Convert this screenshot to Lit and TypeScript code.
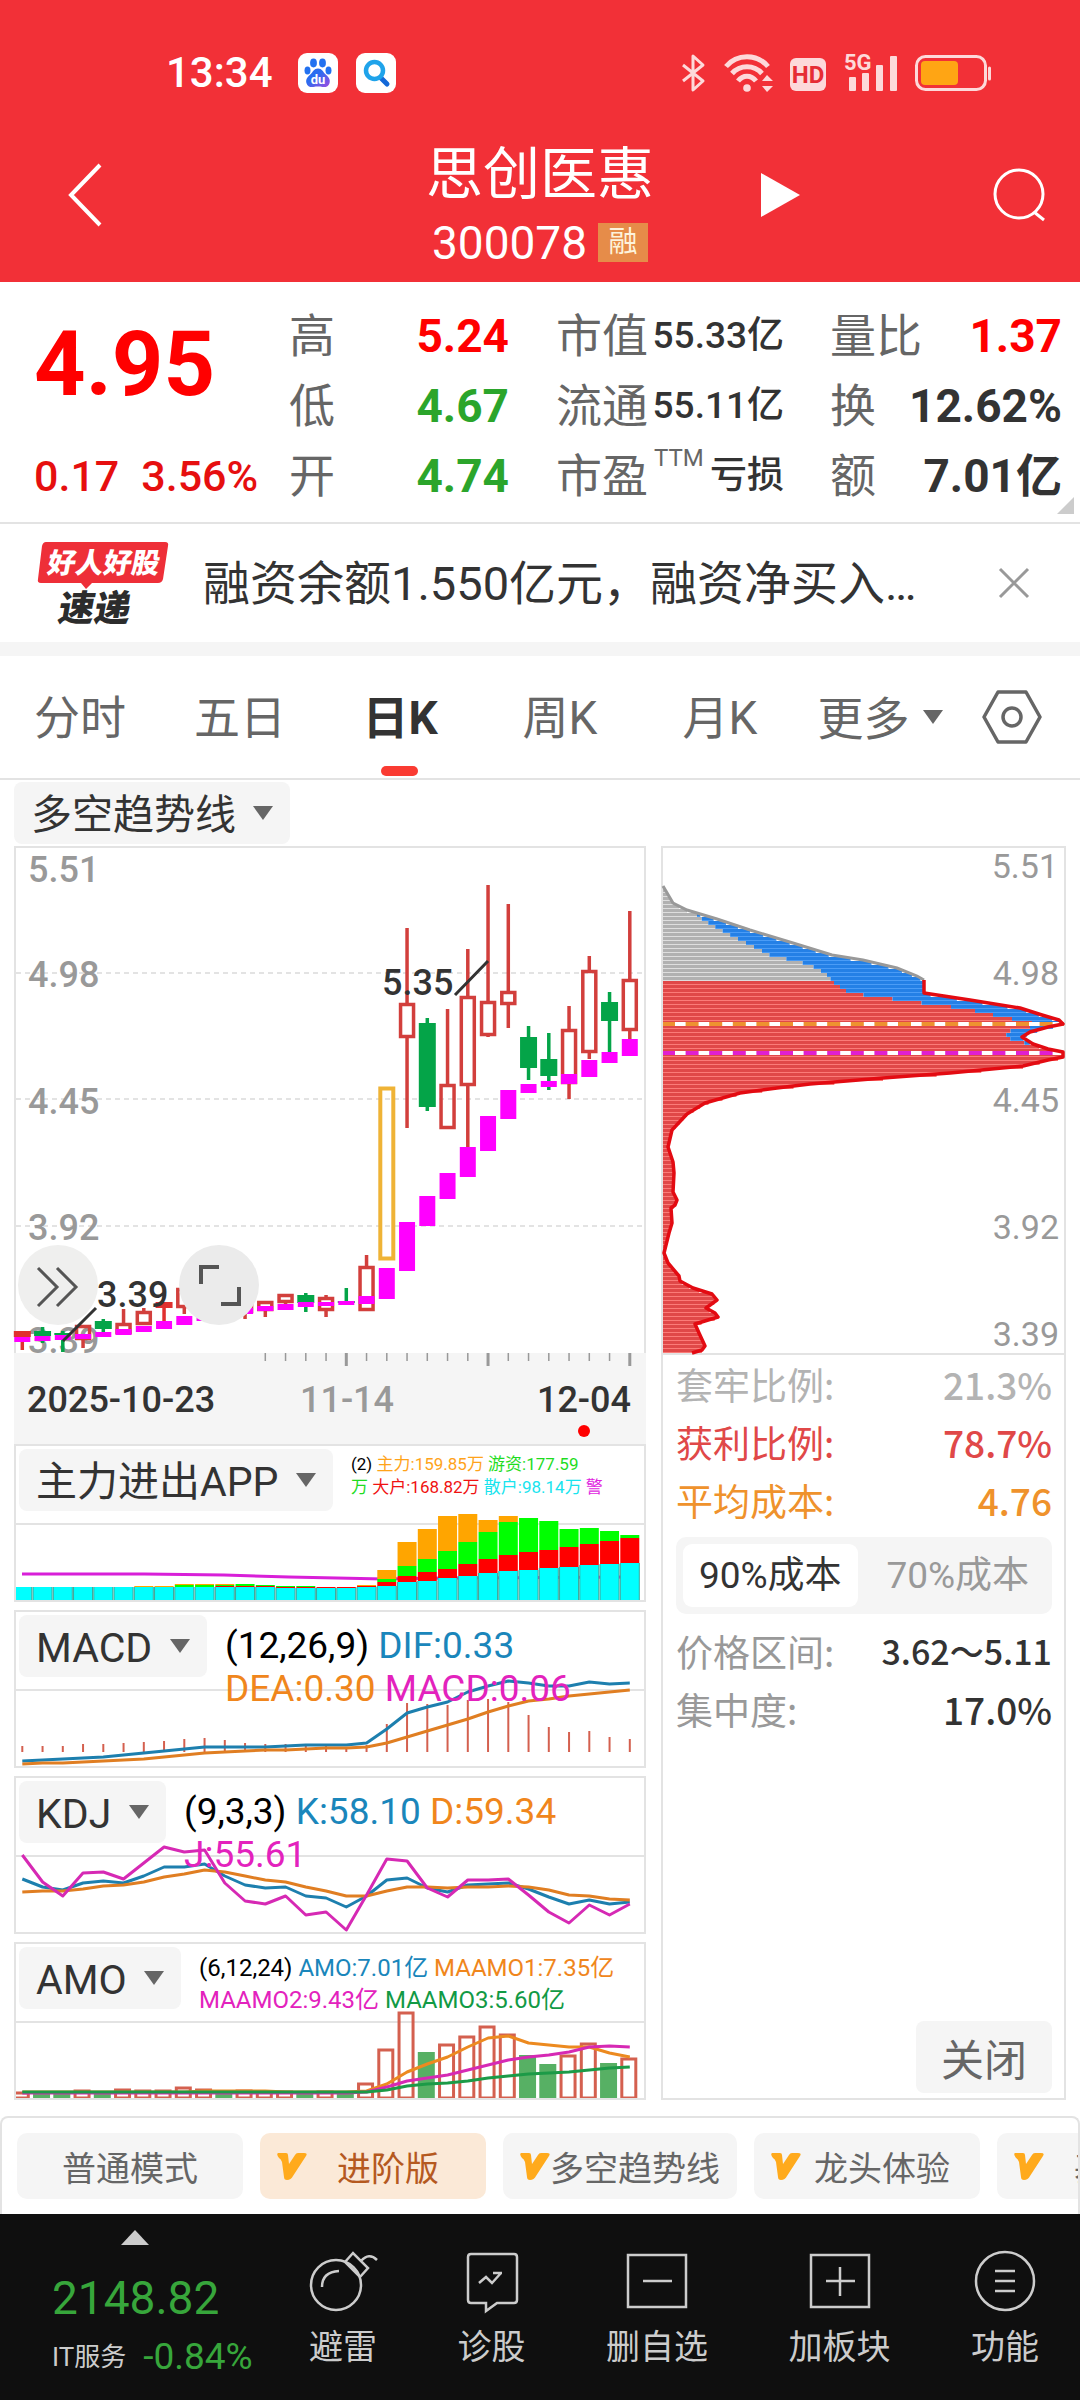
import { LitElement, html, svg, css, nothing } from "lit";
import { customElement, property, state } from "lit/decorators.js";
import { classMap } from "lit/directives/class-map.js";

const STEP = 20.25;
const cx = (i: number) => 8.3 + STEP * i;

const RED = "#d23f3c";
const GREEN = "#04a448";
const MAGENTA = "#ff00ff";

type Candle = { k: "up" | "down" | "solid" | "limit"; hi: number; top: number; bot: number; lo: number };
const candle = (k: Candle["k"], hi: number, top: number, bot: number, lo: number): Candle => ({ k, hi, top, bot, lo });

const CANDLES: Candle[] = [
  candle("solid", 485, 485, 491, 504),
  candle("down", 481, 485, 490, 497),
  candle("down", 485, 487, 489, 506),
  candle("up", 479, 479, 494, 502),
  candle("down", 473, 475, 483, 491),
  candle("up", 463, 477, 488, 488),
  candle("up", 462, 465, 479, 479),
  candle("solid", 456, 456, 462, 476),
  candle("up", 430, 442, 462, 468),
  candle("down", 440, 446, 462, 466),
  candle("up", 448, 452, 466, 470),
  candle("up", 450, 454, 467, 473),
  candle("up", 455, 455, 465, 471),
  candle("up", 448, 448, 457, 460),
  candle("down", 447, 449, 457, 466),
  candle("up", 449, 451, 465, 471),
  candle("down", 442, 455, 457, 457),
  candle("up", 409, 420, 465, 465),
  candle("limit", 241, 241, 414, 414),
  candle("up", 82, 157, 192, 282),
  candle("down", 172, 177, 261, 265),
  candle("up", 163, 238, 283, 283),
  candle("up", 103, 150, 240, 301),
  candle("up", 39, 155, 190, 191),
  candle("up", 58, 145, 159, 182),
  candle("down", 180, 191, 222, 234),
  candle("down", 187, 213, 230, 244),
  candle("up", 160, 183, 238, 253),
  candle("up", 110, 124, 207, 213),
  candle("down", 146, 156, 175, 206),
  candle("up", 65, 133, 185, 193),
];

const TREND: [number, number][] = [
  [491, 496], [490, 495], [489, 494], [488, 493], [486, 491], [483, 489], [480, 486], [475, 483],
  [470, 479], [466, 475], [464, 471], [462, 468], [460, 465], [458, 464], [456, 461], [456, 460],
  [455, 459], [450, 458], [422, 453], [376, 425], [350, 380], [327, 353], [301, 331], [270, 305],
  [244, 273], [238, 247], [235, 241], [228, 238], [214, 231], [206, 217], [193, 210],
];

/* tops of the stacked layers: main, hot money, large, retail */
const FLOW: [number, number, number, number][] = [
  [143, 143, 143, 143], [143, 143, 143, 143], [143, 143, 143, 143], [143, 143, 143, 143],
  [143, 143, 143, 143], [143, 143, 143, 143], [142, 143, 143, 143], [142, 143, 143, 143],
  [140, 141, 143, 143], [140, 141, 143, 143], [140, 141, 142, 143], [140, 140, 142, 143],
  [141, 141, 142, 143], [142, 142, 143, 144], [142, 142, 143, 144], [143, 143, 143, 144],
  [143, 143, 143, 144], [141, 142, 142, 143], [126, 135, 138, 142], [98, 122, 132, 138],
  [85, 115, 128, 137], [72, 107, 125, 134], [70, 98, 120, 132], [76, 88, 115, 129],
  [72, 78, 111, 127], [74, 74, 108, 126], [77, 77, 106, 124], [85, 85, 103, 123],
  [84, 84, 100, 121], [87, 87, 97, 120], [91, 91, 94, 119],
];

const MACD_BARS = [
  136, 136, 136, 134, 134, 133, 132, 131, 129, 128, 130, 133, 134, 134, 136, 136, 137, 135,
  114, 93, 94, 95, 90, 89, 92, 105, 117, 122, 121, 127, 129,
];
const DIF = [
  151, 150, 149, 148, 147, 145, 143, 141, 139, 137, 137, 137, 137, 136, 135, 135, 135, 133,
  119, 103, 97, 92, 82, 76, 71, 73, 76, 76, 72, 74, 73,
];
const DEA = [
  154, 153, 153, 152, 151, 150, 149, 147, 145, 143, 142, 141, 140, 140, 139, 138, 138, 137,
  133, 127, 121, 115, 109, 102, 96, 91, 89, 86, 84, 82, 80,
];

const K = [
  103, 111, 114, 107, 105, 107, 100, 91, 91, 88, 100, 109, 112, 111, 120, 122, 131, 120,
  104, 102, 112, 116, 109, 108, 107, 113, 121, 128, 124, 128, 126,
];
const D = [
  116, 115, 115, 113, 110, 109, 106, 101, 98, 94, 96, 100, 104, 106, 111, 115, 120, 120,
  115, 111, 111, 112, 111, 111, 110, 111, 114, 119, 120, 123, 124,
];
const J = [
  79, 106, 120, 97, 96, 103, 87, 71, 76, 74, 107, 125, 128, 120, 139, 136, 154, 119,
  83, 85, 112, 121, 104, 104, 103, 119, 136, 147, 129, 139, 128,
];

const AMO: [boolean, number][] = [
  [true, 150], [false, 151], [false, 151], [true, 148], [false, 151], [true, 147], [true, 148],
  [true, 148], [true, 145], [true, 147], [false, 151], [true, 148], [true, 149], [true, 149],
  [false, 151], [true, 149], [false, 151], [true, 141], [true, 107], [true, 70], [false, 110],
  [true, 102], [true, 94], [true, 84], [true, 92], [false, 113], [false, 122], [true, 113],
  [true, 101], [false, 121], [true, 116],
];
const flat = (v: number, n: number) => Array.from({ length: n }, () => v);
const MA1 = [...flat(150, 9), ...flat(149, 4), ...flat(150, 4), 149, 142, 130, 122, 115, 105, 96, 94, 101, 103, 105, 105, 111, 115];
const MA2 = [...flat(151, 17), 150, 145, 139, 136, 133, 128, 123, 118, 115, 113, 110, 105, 104, 105];
const MA3 = [...flat(150, 17), 150, 148, 144, 142, 141, 139, 136, 134, 132, 131, 130, 128, 126, 125];

/* chip distribution: [width, height] along the price axis */
const TRAPPED: [number, number][] = [
  [2, 40], [12, 57], [26, 64], [56, 73], [89, 84], [132, 97], [171, 109], [202, 114],
  [219, 118], [236, 122], [256, 130], [263, 134],
];
const PROFIT: [number, number][] = [
  [263, 134], [263, 147], [309, 154], [359, 162], [381, 169], [398, 174], [402, 178], [387, 181],
  [369, 186], [361, 191], [372, 198], [387, 203], [402, 206], [402, 211], [387, 214], [362, 220],
  [289, 227], [222, 232], [149, 238], [116, 242], [79, 247], [44, 257], [26, 268], [11, 284],
  [7, 301], [12, 316], [13, 327], [12, 346], [16, 354], [14, 359], [10, 362], [11, 377], [8, 387],
  [3, 407], [7, 417], [18, 430], [19, 435], [32, 442], [51, 448], [56, 454], [45, 462], [54, 467],
  [57, 471], [34, 478], [38, 487], [44, 500], [41, 504], [31, 507],
];
const INNER: [number, number][] = [
  [36, 68], [42, 73], [56, 81], [71, 89], [87, 97], [103, 105], [112, 110], [132, 113], [148, 118],
  [157, 122], [163, 126], [169, 130], [170, 134], [176, 138], [182, 142], [188, 146], [217, 150],
  [246, 154], [275, 158], [305, 162], [323, 166], [341, 170], [361, 174], [381, 178], [351, 183],
  [345, 187], [346, 191], [359, 195], [372, 198],
];

const at = (pts: [number, number][], y: number) => {
  for (let i = 1; i < pts.length; i++) {
    const [x0, y0] = pts[i - 1];
    const [x1, y1] = pts[i];
    if (y >= y0 && y <= y1) return y1 === y0 ? x1 : x0 + ((x1 - x0) * (y - y0)) / (y1 - y0);
  }
  return null;
};
const poly = (pts: [number, number][]) => pts.map((p) => p.join(",")).join(" ");
const series = (v: number[]) => v.map((y, i) => `${cx(i).toFixed(1)},${y}`).join(" ");
const line = (v: number[], color: string) =>
  svg`<polyline points=${series(v)} fill="none" stroke=${color} stroke-width="3" stroke-linejoin="round"/>`;

const caret = html`<svg class="caret" viewBox="0 0 20 14" width="20" height="14" aria-hidden="true"><path d="M0 0H20L10 14Z" fill="#666"/></svg>`;

@customElement("pick-list")
export class PickList extends LitElement {
  @property() label = "";
  @property() value = "";
  @property({ type: Boolean }) plain = false;

  static styles = css`
    :host { display: inline-block; }
    .pick { display: grid; align-items: center; }
    .pick > * { grid-area: 1 / 1; }
    select {
      appearance: none; border: 0; margin: 0; height: 62px; padding: 4px 54px 0 17px; box-sizing: border-box;
      border-radius: 8px; background: #f5f5f5; color: #333;
      font: 400 41px/58px Roboto, "Noto Sans CJK SC", sans-serif;
    }
    .caret { justify-self: end; margin-right: 17px; pointer-events: none; }
    .plain select { background: none; padding: 4px 33px 0 0; font-size: 46px; color: #666; }
    .plain .caret { margin-right: 0; }
  `;

  render() {
    return html`<div class=${classMap({ pick: true, plain: this.plain })}>
      <select aria-label=${this.label}><option>${this.value}</option></select>${caret}
    </div>`;
  }
}

const legendItem = (i: number, text: string, color: string) =>
  html`${i ? " " : ""}<span style="color:${color}">${text}</span>`;

@customElement("indicator-panel")
export class IndicatorPanel extends LitElement {
  @property() name = "";
  @property() size = "large";
  @property({ attribute: false }) legend: [string, string][][] = [];
  @property({ attribute: false }) chart: unknown = nothing;

  static styles = css`
    :host { display: block; border: 2px solid #e3e3e3; background: #fff; }
    .stack { display: grid; }
    .stack > * { grid-area: 1 / 1; min-width: 0; }
    svg { display: block; width: 100%; height: auto; }
    .over { display: flex; align-items: flex-start; gap: 18px; padding: 3px; }
    .legend { margin: 0; font-family: Roboto, "Noto Sans CJK SC", sans-serif; white-space: nowrap; }
    .row { display: block; }
    .small { font-size: 17px; line-height: 23px; padding-top: 4px; }
    .medium { font-size: 24px; line-height: 32px; padding-top: 5px; }
    .large { font-size: 37px; line-height: 43px; padding-top: 9px; }
  `;

  render() {
    return html`<div class="stack">
      <svg viewBox="2 2 628 154" role="img" aria-label=${this.name}>
        <path d="M0 80H632" stroke="#e3e3e3" stroke-width="2"/>
        ${this.chart}
      </svg>
      <div class="over">
        <pick-list label="指标" value=${this.name}></pick-list>
        <p class="legend ${this.size}">${this.legend.map(
          (row) => html`<span class="row">${row.map(([text, color], i) => legendItem(i, text, color))}</span>`
        )}</p>
      </div>
    </div>`;
  }
}

const BLUE_T = "#1a86bb";
const ORANGE_T = "#f0861c";
const PINK_T = "#e322bd";

@customElement("app-root")
export class AppRoot extends LitElement {
  @state() private tab = 2;
  @state() private cost = 0;
  @state() private mode = 1;
  @state() private notice = true;

  static styles = css`
    :host {
      display: block; background: #fff; color: #333;
      font-family: Roboto, "Noto Sans CJK SC", sans-serif; overflow-x: hidden;
    }
    button { appearance: none; border: 0; margin: 0; padding: 0; background: none; font: inherit; color: inherit; }
    svg { display: block; overflow: visible; }
    h1, p, dl, dd { margin: 0; }

    .top { background: #f23037; color: #fff; padding-top: 45px; }
    .status { display: flex; align-items: center; justify-content: space-between; height: 56px; padding: 0 88px 0 166px; }
    .status-left, .status-right { display: flex; align-items: center; }
    .status-left { gap: 18px; }
    .status-right { gap: 17px; }
    .clock { font-size: 42px; font-weight: 500; line-height: 56px; padding-right: 7px; }
    .title-bar { display: grid; grid-template-columns: 1fr auto 1fr; align-items: center; height: 181px; box-sizing: border-box; padding: 6px 34px 0; }
    .back { justify-self: start; margin-left: 32px; }
    .title { text-align: center; padding-top: 20px; }
    .title h1 { font-size: 57px; font-weight: 400; line-height: 76px; }
    .code { display: flex; align-items: center; justify-content: center; gap: 11px; font-size: 46px; line-height: 60px; }
    .tag { background: #e68c49; color: #fdf3dc; font-size: 29px; line-height: 39px; width: 50px; text-align: center; }
    .title-right { display: flex; justify-content: space-between; align-items: center; padding-left: 106px; }

    .quote {
      display: grid; column-gap: 30px; padding: 19px 18px 11px 34px;
      grid-template-columns: minmax(0, 225fr) minmax(0, 237fr) minmax(0, 244fr) minmax(0, 232fr);
      border-bottom: 2px solid #e3e3e3; position: relative;
    }
    .price { display: flex; flex-direction: column; justify-content: space-between; color: #ff0000; white-space: nowrap; }
    .now { font-size: 90px; font-weight: 700; line-height: 124px; padding-top: 2px; }
    .change { display: flex; gap: 22px; font-size: 43px; font-weight: 500; line-height: 70px; color: #e60f0f; }
    .facts-a { padding-right: 17px; }
    .facts-b { padding-right: 16px; }
    .fact { display: flex; justify-content: space-between; height: 70px; line-height: 70px; white-space: nowrap; }
    .fact dt { font-size: 46px; color: #666; display: flex; }
    .fact dd { font-size: 46px; font-weight: 700; }
    .facts-b dd { font-size: 37px; font-weight: 500; }
    .fact sup { font-size: 24px; line-height: 24px; padding: 5px 0 0 6px; }
    .fact .rise { color: #ff0000; }
    .fact .fall { color: #2ba52b; }
    .corner { position: absolute; right: 6px; bottom: 8px; }

    .notice { display: flex; align-items: center; height: 118px; padding: 0 50px 0 36px; gap: 33px; border-bottom: 14px solid #f5f5f5; }
    .notice a { flex: 1; min-width: 0; font-size: 47px; line-height: 118px; padding-top: 2px; color: #333; text-decoration: none; white-space: nowrap; overflow: hidden; }

    .tabs { display: grid; grid-template-columns: repeat(6, 160fr) 120fr; height: 122px; border-bottom: 2px solid #e3e3e3; }
    .tab { position: relative; font-size: 46px; line-height: 120px; padding-top: 2px; color: #666; }
    .tab.on { color: #333; font-weight: 700; }
    .tab.on::after { content: ""; position: absolute; left: 50%; bottom: 2px; width: 37px; height: 10px; margin-left: -19px; border-radius: 5px; background: #fa3b32; }
    .more, .gear { display: flex; align-items: center; justify-content: center; }
    .gear { padding-right: 16px; }

    .pick-row { padding: 2px 14px; height: 62px; }
    .main { display: grid; grid-template-columns: 632fr 405fr; gap: 15px; padding: 0 14px; }
    .left { display: flex; flex-direction: column; gap: 8px; min-width: 0; }
    .wide { width: 100%; height: auto; }
    .candles { position: relative; border: 2px solid #e3e3e3; border-bottom: 0; }
    .axis { background: #f5f5f5; margin-bottom: -8px; }
    .round { position: absolute; bottom: 28px; width: 80px; height: 80px; border-radius: 50%; }
    .expand { left: 2px; background: #efefee; }
    .full { left: 163px; background: #ebebeb; }
    .mark { position: absolute; left: 0; top: 0; pointer-events: none; }
    .axis-text { font: 500 36px Roboto, sans-serif; }
    .axis-thin { font: 400 34px Roboto, sans-serif; }

    .right { border: 2px solid #e3e3e3; display: flex; flex-direction: column; min-width: 0; }
    .dist { border-bottom: 2px solid #e3e3e3; }
    .stats { flex: 1; display: flex; flex-direction: column; padding: 0 12px 5px 13px; font-family: "Noto Sans CJK SC", sans-serif; }
    .stat { display: flex; justify-content: space-between; align-items: center; height: 58px; font-size: 37px; line-height: 58px; white-space: nowrap; }
    .stat dd { font-weight: 500; }
    .range dd { font-size: 34px; }
    .gray { color: #b3b3b3; }
    .red { color: #e04848; }
    .orange { color: #ef922c; }
    .dim dt { color: #999; }
    .seg { display: grid; grid-template-columns: 1fr 1fr; gap: 13px; margin: 8px 0 8px; padding: 7px; border-radius: 10px; background: #f5f5f5; font: 400 37px/63px Roboto, "Noto Sans CJK SC", sans-serif; }
    .seg button { border-radius: 9px; color: #999; white-space: nowrap; }
    .seg button.on { background: #fff; color: #333; }
    .close { align-self: flex-end; margin-top: auto; width: 136px; height: 72px; border-radius: 8px; background: #f5f5f5; font-size: 43px; color: #666; }

    .modes { display: flex; gap: 17px; margin-top: 16px; padding: 15px 15px; height: 66px; border: 2px solid #e3e3e3; border-bottom: 0; border-radius: 8px 8px 0 0; overflow: hidden; }
    .mode { flex: none; display: flex; align-items: center; min-width: 226px; padding: 0 17px; border-radius: 10px; background: #f5f5f5; font-size: 34px; color: #666; }
    .mode span { flex: 1; text-align: center; white-space: nowrap; }
    .mode.on { background: #fbe9d7; color: #b5591f; }

    .nav { display: flex; gap: 53px; background: #0f0f0f; color: #ccc; height: 186px; padding: 0 41px 0 52px; box-sizing: border-box; }
    .index { display: flex; flex: none; flex-direction: column; align-items: flex-start; width: 204px; padding-top: 16px; white-space: nowrap; }
    .up { align-self: center; margin-right: 38px; }
    .level { font-size: 46px; line-height: 60px; margin-top: 23px; color: #37a63b; }
    .sector { display: flex; align-items: center; gap: 17px; font-size: 26px; line-height: 58px; }
    .sector b { font-weight: 400; font-size: 37px; color: #37a63b; }
    .items { flex: 1; display: flex; justify-content: space-between; align-items: flex-start; }
    .item { display: flex; flex-direction: column; align-items: center; gap: 10px; padding-top: 36px; font-size: 34px; line-height: 50px; white-space: nowrap; }
  `;

  private statusBar() {
    return html`<div class="status">
      <div class="status-left">
        <span class="clock">13:34</span>
        <svg width="40" height="40" viewBox="0 0 40 40" aria-label="百度">
          <defs><linearGradient id="paw" x1="0" y1="0" x2="1" y2="1"><stop offset=".4" stop-color="#2a6cf0"/><stop offset="1" stop-color="#a04be0"/></linearGradient></defs>
          <rect width="40" height="40" rx="9" fill="#fff"/>
          <g fill="#2271f0"><ellipse cx="15.500" cy="10" rx="3.400" ry="4.400"/><ellipse cx="24.500" cy="10" rx="3.400" ry="4.400"/><ellipse cx="9.500" cy="17.500" rx="3" ry="4"/><ellipse cx="30.500" cy="17.500" rx="3" ry="4"/></g>
          <path d="M20 15.500c-4 0-5 3.500-8 6.300-3 2.700-4.500 5-3.500 8.400 1 3.300 4 4.300 7 3.700 3-.6 6-.6 9 0s6-.4 7-3.700c1-3.400-.5-5.700-3.500-8.400-3-2.800-4-6.300-8-6.300Z" fill="url(#paw)"/>
          <text x="20" y="31" font-family="Roboto" font-size="13" font-weight="700" fill="#fff" text-anchor="middle">du</text>
        </svg>
        <svg width="40" height="40" viewBox="0 0 40 40" aria-label="搜索">
          <rect width="40" height="40" rx="9" fill="#fff"/>
          <path d="M24 24l7 7" stroke="#1468d8" stroke-width="5" stroke-linecap="round"/>
          <circle cx="18.500" cy="17.500" r="8.500" fill="#fff" stroke="#1fa3ea" stroke-width="4.500"/>
        </svg>
      </div>
      <div class="status-right">
        <svg width="28" height="40" viewBox="0 0 28 40" fill="none" stroke="#fdd9da" stroke-width="3" stroke-linejoin="round" aria-label="蓝牙"><path d="M4 12L24 28 14 37V3L24 12 4 28"/></svg>
        <svg width="49" height="40" viewBox="0 0 49 40" aria-label="无线网络">
          <g fill="none" stroke="#fdd9da" stroke-width="5"><path d="M2 13.500C13 .5 33 .5 44 13.500"/><path d="M8 20.500C16 11.500 30 11.500 38 20.500"/><path d="M14 28C19 21.500 27 21.500 32 28"/></g>
          <circle cx="23" cy="35" r="3.800" fill="#fdd9da"/>
          <path d="M38 28l5-6 6 6ZM38 33l5 6 6-6Z" fill="#fdd9da"/>
        </svg>
        <svg width="37" height="40" viewBox="0 0 37 40" aria-label="高清通话">
          <rect y="5" width="36" height="33" rx="6" fill="#fdd9da"/>
          <text x="18" y="30" font-family="Roboto" font-size="24" font-weight="700" fill="#e62c34" text-anchor="middle">HD</text>
        </svg>
        <svg width="54" height="42" viewBox="0 0 54 42" fill="#fdd9da" aria-label="移动信号">
          <text x="0" y="18" font-family="Roboto" font-size="22" font-weight="700">5G</text>
          <rect x="5" y="25" width="7" height="14" rx="1"/><rect x="18" y="21" width="7" height="18" rx="1"/><rect x="32" y="13" width="7" height="26" rx="1"/><rect x="46" y="4" width="7" height="35" rx="1"/>
        </svg>
        <svg width="77" height="38" viewBox="0 0 77 38" aria-label="电量">
          <rect x="1.500" y="2.500" width="69" height="33" rx="9" fill="none" stroke="#fdd9da" stroke-width="3"/>
          <rect x="6" y="7" width="37" height="24" rx="4" fill="#ffa514"/>
          <path d="M74.500 14V25" stroke="#fdd9da" stroke-width="3" stroke-linecap="round"/>
        </svg>
      </div>
    </div>`;
  }

  private quote() {
    const fact = (k: unknown, v: string, cls = "") =>
      html`<div class="fact"><dt>${k}</dt><dd class=${cls}>${v}</dd></div>`;
    return html`<section class="quote">
      <div class="price">
        <div class="now">4.95</div>
        <div class="change"><span>0.17</span><span>3.56%</span></div>
      </div>
      <dl class="facts-a">${fact("高", "5.24", "rise")}${fact("低", "4.67", "fall")}${fact("开", "4.74", "fall")}</dl>
      <dl class="facts-b">${fact("市值", "55.33亿")}${fact("流通", "55.11亿")}${fact(html`市盈<sup>TTM</sup>`, "亏损")}</dl>
      <dl>${fact("量比", "1.37", "rise")}${fact("换", "12.62%")}${fact("额", "7.01亿")}</dl>
      <svg class="corner" width="17" height="17" viewBox="0 0 17 17" aria-hidden="true"><path d="M17 0V17H0Z" fill="#ccc"/></svg>
    </section>`;
  }

  private candles() {
    return html`<div class="candles">
      <svg class="wide" viewBox="2 2 628 505" role="img" aria-label="日K线">
        <g stroke="#e3e3e3" stroke-width="2" stroke-dasharray="5 4"><path d="M2 127H630M2 253H630M2 380H630"/></g>
        <g class="axis-text" fill="#999">
          <text x="14" y="36">5.51</text><text x="14" y="141">4.98</text><text x="14" y="268">4.45</text><text x="14" y="394">3.92</text><text x="14" y="507">3.39</text>
        </g>
        ${CANDLES.map((c, i) => {
          const x = cx(i);
          const color = c.k === "down" ? GREEN : c.k === "limit" ? "#efb336" : c.k === "solid" ? "#e0302f" : RED;
          const hollow = c.k === "up" || c.k === "limit";
          const sw = c.k === "limit" ? 4 : 3.5;
          const h = c.bot - c.top;
          return svg`<path d="M${x} ${c.hi}V${c.top}M${x} ${c.bot}V${c.lo}" stroke=${color} stroke-width="3.500"/>
            ${hollow
              ? svg`<rect x=${x - 6.5} y=${c.top + 1.5} width="13" height=${h - 3} fill="none" stroke=${color} stroke-width=${sw}/>`
              : svg`<rect x=${x - 8.5} y=${c.top} width="17" height=${h} fill=${color}/>`}`;
        })}
        ${TREND.map(([t, b], i) => svg`<rect x=${cx(i) - 8} y=${t} width="16" height=${b - t} fill=${MAGENTA}/>`)}
      </svg>
      <button class="round expand" aria-label="展开">
        <svg width="80" height="80" viewBox="0 0 80 80" fill="none" stroke="#555" stroke-width="3"><path d="M20 23L39 42 20 61M39 23L58 42 39 61"/></svg>
      </button>
      <button class="round full" aria-label="全屏">
        <svg width="80" height="80" viewBox="0 0 80 80" fill="none" stroke="#555" stroke-width="4"><path d="M22 39V22H40M60 42V59H42"/></svg>
      </button>
      <svg class="wide mark" viewBox="2 2 628 505" aria-hidden="true">
        <g class="axis-text" fill="#333"><text x="368" y="149">5.35</text><text x="83" y="461">3.39</text></g>
        <path d="M441 149L474 115M82 462L49 495" stroke="#333" stroke-width="3"/>
      </svg>
    </div>`;
  }

  private dateAxis() {
    return html`<div class="axis"><svg class="wide" viewBox="0 0 632 91" role="img" aria-label="日期">
      ${Array.from({ length: 19 }, (_, n) => n + 12).map((i) => {
        const big = (i - 16) % 7 === 0;
        return svg`<path d="M${cx(i)} 0V${big ? 13 : 8}" stroke="#999" stroke-width=${big ? 3 : 1.5}/>`;
      })}
      <g class="axis-text"><text x="13" y="59" fill="#333">2025-10-23</text><text x="333" y="59" fill="#999" text-anchor="middle">11-14</text><text x="617" y="59" fill="#333" text-anchor="end">12-04</text></g>
      <circle cx="570" cy="78" r="6" fill="#f00"/>
    </svg></div>`;
  }

  private flowChart() {
    const layers = ["#ffa500", "#00ff00", "#ff0000", "#00ffff"];
    return svg`<path d="M8 130H130L210 131L275 133L370 135L430 134L616 133" fill="none" stroke="#d81fd8" stroke-width="3"/>
      ${FLOW.map((tops, i) => layers.map((fill, n) => {
        const bottom = n < 3 ? tops[n + 1] : 156;
        const h = bottom - tops[n];
        return h > 0 ? svg`<rect x=${cx(i) - 9.5} y=${tops[n]} width="19" height=${h} fill=${fill}/>` : nothing;
      }))}
      ${FLOW.map((tops, i) => svg`<path d="M${cx(i) - 9.5} ${tops[3]}V156M${cx(i) + 9.5} ${tops[3]}V156" stroke="#3aa79b" stroke-width="1"/>`)}`;
  }

  private macdChart() {
    return svg`${MACD_BARS.map((t, i) => svg`<path d="M${cx(i)} ${t}V142" stroke="#d4604f" stroke-width="2"/>`)}
      ${line(DIF, "#1d7fae")}${line(DEA, "#e07e22")}`;
  }

  private kdjChart() {
    return svg`${line(K, "#1d7fae")}${line(D, "#e07e22")}${line(J, "#d629b4")}`;
  }

  private amoChart() {
    return svg`${AMO.map(([up, t], i) => up
      ? svg`<rect x=${cx(i) - 8} y=${t + 1} width="14" height=${155 - t} fill="none" stroke="#d4604f" stroke-width="3"/>`
      : svg`<rect x=${cx(i) - 9.5} y=${t} width="17" height=${157 - t} fill="#57b064"/>`)}
      ${line(MA1, "#ec8a20")}${line(MA2, "#d629b4")}${line(MA3, "#1c9a47")}`;
  }

  private distribution() {
    const rows = [];
    for (let y = 44; y < 507; y += 4) {
      const outer = at(y < 134 ? TRAPPED : PROFIT, y) ?? 0;
      const inner = Math.min(at(INNER, y) ?? outer, outer);
      const low = y < 135;
      const base = low ? "#b1b1b1" : "#e04848";
      const soft = low ? "#dedede" : "#fb7b78";
      rows.push(svg`<rect x="2" y=${y - 1} width=${inner - 2} height="3" fill=${base}/><rect x="2" y=${y + 2} width=${inner - 2} height="1" fill=${soft}/>`);
      if (outer > inner + 1)
        rows.push(svg`<rect x=${inner} y=${y - 1} width=${outer - inner} height="3" fill="#2480e6"/><rect x=${inner} y=${y + 2} width=${outer - inner} height="1" fill="#4b9cf6"/>`);
    }
    return html`<svg class="wide" viewBox="2 2 401 505" role="img" aria-label="筹码分布">
      ${rows}
      <g stroke="#fff" stroke-width="4"><path d="M2 178H402M2 207H402"/></g>
      <g stroke-width="4" stroke-dasharray="13 10.600" stroke-dashoffset="1"><path d="M2 178H403" stroke="#ee9230"/><path d="M2 207H403" stroke="#e01fd0"/></g>
      <polyline points=${poly(TRAPPED)} fill="none" stroke="#999" stroke-width="3"/>
      <polyline points=${poly(PROFIT)} fill="none" stroke="#e30b12" stroke-width="3.500" stroke-linejoin="round"/>
      <g class="axis-thin" fill="#999" text-anchor="end">
        <text x="397" y="32">5.51</text><text x="398" y="139">4.98</text><text x="398" y="266">4.45</text><text x="398" y="393">3.92</text><text x="398" y="500">3.39</text>
      </g>
    </svg>`;
  }

  private navItem(label: string, icon: unknown, w: number) {
    return html`<button class="item">
      <svg width=${w} height="62" viewBox="0 0 ${w} 62" fill="none" stroke="#ccc" stroke-width="2.500" aria-hidden="true">${icon}</svg>
      ${label}
    </button>`;
  }

  render() {
    const tabs = ["分时", "五日", "日K", "周K", "月K"];
    const modes = ["普通模式", "进阶版", "多空趋势线", "龙头体验", "基本面"];
    const vip = html`<svg width="30" height="30" viewBox="0 0 30 30" aria-hidden="true"><path d="M1 2H9Q11 2 11 4L12 13 18 4Q19 2 21 2H27Q31 2 29 5L16 25Q14 29 10 29 7 29 7 26L5 11Q4 8 2 7 -1 3 1 2Z" fill="#ffaa1c"/></svg>`;
    return html`
      <header class="top">
        ${this.statusBar()}
        <div class="title-bar">
          <button class="back" aria-label="返回"><svg width="38" height="64" viewBox="0 0 38 64" fill="none" stroke="#fff" stroke-width="4"><path d="M34 2L5 32 34 62"/></svg></button>
          <div class="title">
            <h1>思创医惠</h1>
            <div class="code"><span>300078</span><span class="tag">融</span></div>
          </div>
          <div class="title-right">
            <button aria-label="下一只"><svg width="42" height="46" viewBox="0 0 42 46"><path d="M1 1L40 23 1 45Z" fill="#fff"/></svg></button>
            <button aria-label="搜索"><svg width="54" height="54" viewBox="0 0 54 54" fill="none" stroke="#fff" stroke-width="3"><circle cx="27" cy="26" r="24"/><path d="M42 44L52 52"/></svg></button>
          </div>
        </div>
      </header>

      ${this.quote()}

      ${this.notice
        ? html`<section class="notice">
            <svg width="134" height="86" viewBox="0 0 134 86">
              <path d="M10 2H129Q133 2 132 6L127 39Q126 43 122 43H56L50 49 45 43H5Q1 43 2 39L6 6Q7 2 10 2Z" fill="#ee2f38"/>
              <text transform="skewX(-10)" x="16" y="33" font-family="Noto Sans CJK SC" font-weight="900" font-size="28" fill="#fff">好人好股</text>
              <text transform="skewX(-10)" x="35" y="81" font-family="Noto Sans CJK SC" font-weight="900" font-size="36" fill="#2c2c2c">速递</text>
            </svg>
            <a href="#margin">融资余额1.550亿元，融资净买入…</a>
            <button aria-label="关闭提示" @click=${() => (this.notice = false)}>
              <svg width="32" height="32" viewBox="0 0 32 32" stroke="#999" stroke-width="3"><path d="M2 2L30 30M30 2L2 30"/></svg>
            </button>
          </section>`
        : nothing}

      <nav class="tabs">
        ${tabs.map((t, i) => html`<button class=${classMap({ tab: true, on: this.tab === i })} @click=${() => (this.tab = i)}>${t}</button>`)}
        <div class="more"><pick-list plain label="更多周期" value="更多"></pick-list></div>
        <button class="gear" aria-label="设置">
          <svg width="60" height="54" viewBox="0 0 60 54" fill="none" stroke="#666" stroke-width="3.500" stroke-linejoin="round"><path d="M16 2H44L58 27 44 52H16L2 27Z"/><circle cx="30" cy="27" r="9"/></svg>
        </button>
      </nav>

      <div class="pick-row"><pick-list label="主图指标" value="多空趋势线"></pick-list></div>

      <main class="main">
        <div class="left">
          <div>${this.candles()}${this.dateAxis()}</div>
          <indicator-panel name="主力进出APP" size="small" .chart=${this.flowChart()} .legend=${[
            [["(2)", "#000"], ["主力:159.85万", "#ffa31a"], ["游资:177.59", "#1fdc1f"]],
            [["万", "#1fdc1f"], ["大户:168.82万", "#f01212"], ["散户:98.14万", "#18e4ee"], ["警", "#e01fe0"]],
          ]}></indicator-panel>
          <indicator-panel name="MACD" .chart=${this.macdChart()} .legend=${[
            [["(12,26,9)", "#000"], ["DIF:0.33", BLUE_T]],
            [["DEA:0.30", ORANGE_T], ["MACD:0.06", PINK_T]],
          ]}></indicator-panel>
          <indicator-panel name="KDJ" .chart=${this.kdjChart()} .legend=${[
            [["(9,3,3)", "#000"], ["K:58.10", BLUE_T], ["D:59.34", ORANGE_T]],
            [["J:55.61", PINK_T]],
          ]}></indicator-panel>
          <indicator-panel name="AMO" size="medium" .chart=${this.amoChart()} .legend=${[
            [["(6,12,24)", "#000"], ["AMO:7.01亿", BLUE_T], ["MAAMO1:7.35亿", ORANGE_T]],
            [["MAAMO2:9.43亿", PINK_T], ["MAAMO3:5.60亿", "#129a45"]],
          ]}></indicator-panel>
        </div>

        <aside class="right">
          <div class="dist">${this.distribution()}</div>
          <div class="stats">
            <dl>
              <div class="stat gray"><dt>套牢比例:</dt><dd>21.3%</dd></div>
              <div class="stat red"><dt>获利比例:</dt><dd>78.7%</dd></div>
              <div class="stat orange"><dt>平均成本:</dt><dd>4.76</dd></div>
            </dl>
            <div class="seg">${["90%成本", "70%成本"].map((t, i) => html`<button class=${classMap({ on: this.cost === i })} @click=${() => (this.cost = i)}>${t}</button>`)}</div>
            <dl>
              <div class="stat dim range"><dt>价格区间:</dt><dd>3.62～5.11</dd></div>
              <div class="stat dim"><dt>集中度:</dt><dd>17.0%</dd></div>
            </dl>
            <button class="close">关闭</button>
          </div>
        </aside>
      </main>

      <div class="modes">
        ${modes.map((m, i) => html`<button class=${classMap({ mode: true, on: this.mode === i })} @click=${() => (this.mode = i)}>${i ? vip : nothing}<span>${m}</span></button>`)}
      </div>

      <footer class="nav">
        <div class="index">
          <svg class="up" width="28" height="15" viewBox="0 0 28 15" aria-hidden="true"><path d="M14 0L28 15H0Z" fill="#ccc"/></svg>
          <span class="level">2148.82</span>
          <span class="sector">IT服务 <b>-0.84%</b></span>
        </div>
        <div class="items">
          ${this.navItem("避雷", svg`<circle cx="27" cy="35" r="25"/><path d="M36 12L44 3 59 18 51 27ZM52 11Q60 2 68 10M13 37Q13 22 30 21"/>`, 68)}
          ${this.navItem("诊股", svg`<path d="M13 4H56Q59 4 59 7V50Q59 53 56 53H39L28 61V53H13Q10 53 10 50V7Q10 4 13 4Z"/><path d="M21 33L28 27 34 33 43 23M35 23H44"/>`, 68)}
          ${this.navItem("删自选", svg`<path d="M2 5H60V57H2ZM17 31H46"/>`, 62)}
          ${this.navItem("加板块", svg`<path d="M2 5H60V57H2ZM17 31H46M31 17V46"/>`, 62)}
          ${this.navItem("功能", svg`<circle cx="31" cy="31" r="29"/><path d="M21 21H41M21 31H41M21 41H41"/>`, 62)}
        </div>
      </footer>`;
  }
}
